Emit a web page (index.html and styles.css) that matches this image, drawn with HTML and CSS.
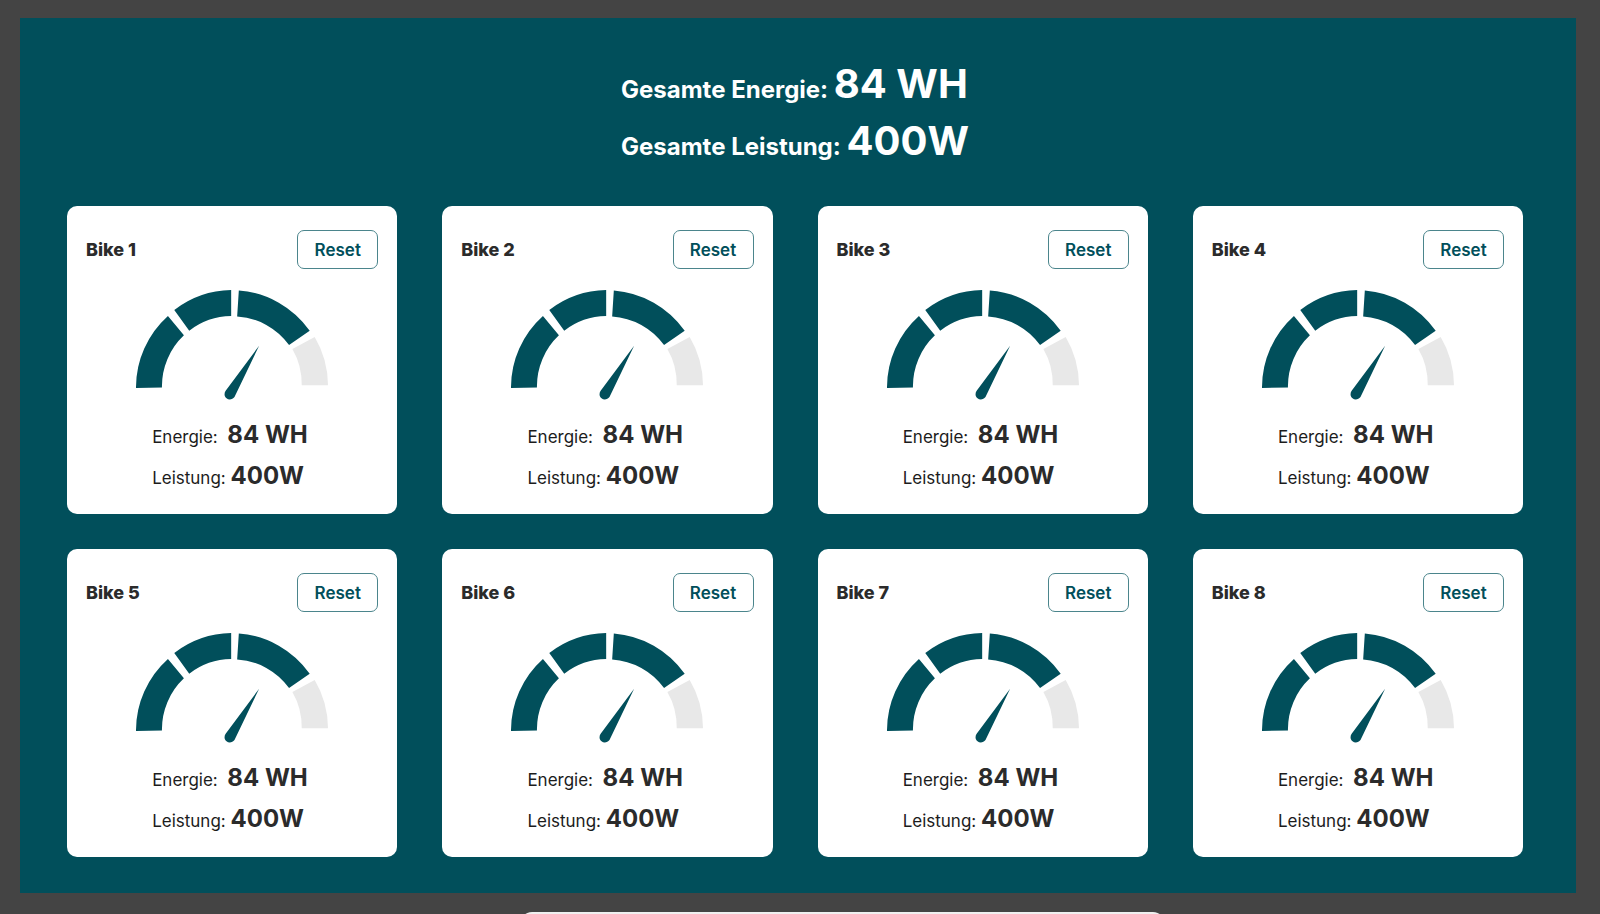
FILE: index.html
```html
<!DOCTYPE html>
<html lang="de">
<head>
<meta charset="utf-8">
<title>Bikes</title>
<link rel="stylesheet" href="styles.css">
</head>
<body>
<svg class="symbols" aria-hidden="true">
  <symbol id="gauge" viewBox="48 29 577 330">
    <path class="on" d="M48 323A288 288 0 0 1 144 107L192 165A210 210 0 0 0 126 322Z"/>
    <path class="on" d="M163 89A288 288 0 0 1 334 29V107A210 210 0 0 0 208 151Z"/>
    <path class="on" d="M357 30A288 288 0 0 1 570 151L508 194A210 210 0 0 0 352 108Z"/>
    <path class="off" d="M585 170A288 288 0 0 1 625 315H546A210 210 0 0 0 518 206Z"/>
    <path class="on" d="M418 196L344 350C338 358 327 360 320 354C313 349 312 339 318 331Z"/>
  </symbol>
</svg>
<main class="panel">
  <header class="totals">
    <p class="total">Gesamte Energie: <strong>84 WH</strong></p>
    <p class="total">Gesamte Leistung: <strong>400W</strong></p>
  </header>
  <div class="grid" id="grid"></div>
</main>
<div class="dock"></div>
<template id="card">
  <section class="card">
    <div class="card-head"><h2></h2><button type="button">Reset</button></div>
    <svg class="gauge" aria-hidden="true"><use href="#gauge"/></svg>
    <div class="stats">
      <p>Energie:&nbsp; <strong>84 WH</strong></p>
      <p>Leistung: <strong>400W</strong></p>
    </div>
  </section>
</template>
<script src="app.js"></script>
</body>
</html>
```
FILE: styles.css
```css
* { box-sizing: border-box; }
body {
  margin: 0;
  padding: 18px 24px 21px 20px;
  background: #444;
  color: #2b2b2b;
  font-family: Inter, sans-serif;
}
h2, p { margin: 0; }
strong { line-height: 1; }
.symbols { position: absolute; width: 0; height: 0; }
.panel {
  background: #014f5b;
  padding: 43px 53px 36px 47px;
}
.totals {
  width: fit-content;
  margin: 0 auto 31px;
  color: #fff;
}
.total {
  font-size: 24px;
  font-weight: 700;
  line-height: 57px;
}
.total strong { font-size: 40px; font-weight: 700; }
.grid {
  display: grid;
  grid-template-columns: repeat(4, 1fr);
  gap: 35px 45px;
}
.card {
  background: #fff;
  border-radius: 10px;
  padding: 24px 19px 15px;
}
.card-head {
  display: flex;
  justify-content: space-between;
  align-items: center;
}
h2 { font-size: 18px; font-weight: 800; }
button {
  width: 81px;
  height: 39px;
  padding: 0;
  border: 1px solid #4b858c;
  border-radius: 7px;
  background: #fff;
  color: #014f5b;
  font: 600 17px Inter, sans-serif;
}
.gauge {
  display: block;
  width: 192px;
  height: 110px;
  margin: 21px auto 17px;
}
.on { fill: #014f5b; }
.off { fill: #e8e8e8; }
.stats { width: 160px; margin: 0 auto; white-space: nowrap; }
.stats p { font-size: 17px; line-height: 41px; color: #1c1c1c; }
.stats strong { font-size: 24px; font-weight: 700; color: #2b2b2b; }
.dock {
  position: fixed;
  left: 520px;
  right: 435px;
  top: 912px;
  height: 60px;
  border-radius: 12px;
  background: #f0f0f0;
}
```
FILE: app.js
```js
const grid = document.getElementById('grid');
const template = document.getElementById('card');
for (let i = 1; i <= 8; i++) {
  const card = template.content.cloneNode(true);
  card.querySelector('h2').textContent = 'Bike ' + i;
  grid.append(card);
}
```
